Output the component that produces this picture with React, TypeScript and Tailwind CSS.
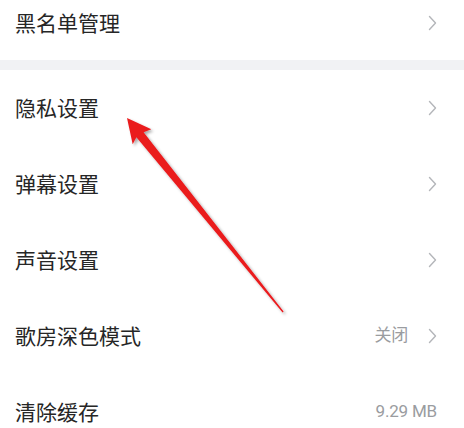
const rows = [
  { label: "隐私设置" },
  { label: "弹幕设置" },
  { label: "声音设置" },
  { label: "歌房深色模式", value: "关闭" },
  { label: "清除缓存", value: "9.29 MB", noArrow: true },
]

function Chevron() {
  return (
    <svg width="9" height="16" viewBox="0 0 9 16" className="shrink-0">
      <path d="M1.5 1.5 L7.5 8 L1.5 14.5" fill="none" stroke="#b4b6ba" strokeWidth="1.4" strokeLinecap="round" strokeLinejoin="round" />
    </svg>
  )
}

function Row({ label, value, noArrow }: { label: string; value?: string; noArrow?: boolean }) {
  return (
    <div className="flex h-[76px] items-center justify-between pl-[15px] pr-[27px]">
      <span className="text-[21px] text-[#262626]">{label}</span>
      <div className="flex items-center gap-[20px]">
        {value && (
          <span className="text-[17px] text-[#9a9ca0] font-['Roboto','Noto_Sans_CJK_SC',sans-serif] tracking-[-0.2px]">
            {value}
          </span>
        )}
        {!noArrow && <Chevron />}
      </div>
    </div>
  )
}

export default function App() {
  return (
    <div className="relative h-[428px] w-[464px] overflow-hidden bg-white font-['Noto_Sans_CJK_SC',sans-serif]">
      <div className="-mt-[15px] flex h-[75px] items-center justify-between pl-[15px] pr-[27px]">
        <span className="text-[21px] text-[#262626]">黑名单管理</span>
        <Chevron />
      </div>
      <div className="h-[10px] bg-[#f1f2f4]" />
      <div className="flex flex-col">
        {rows.map((r) => (
          <Row key={r.label} {...r} />
        ))}
      </div>
      <svg className="pointer-events-none absolute left-0 top-0" width="464" height="428">
        <defs>
          <filter id="sh" x="-20%" y="-20%" width="140%" height="140%">
            <feDropShadow dx="2" dy="2" stdDeviation="1.8" floodColor="#000" floodOpacity="0.35" />
          </filter>
        </defs>
        <polygon
          points="127,118 151.3,129.2 143.6,132.2 283.6,311.6 282.6,312.6 136.4,137.2 132.7,144.2"
          fill="#ea1a1e"
          filter="url(#sh)"
        />
      </svg>
    </div>
  )
}
